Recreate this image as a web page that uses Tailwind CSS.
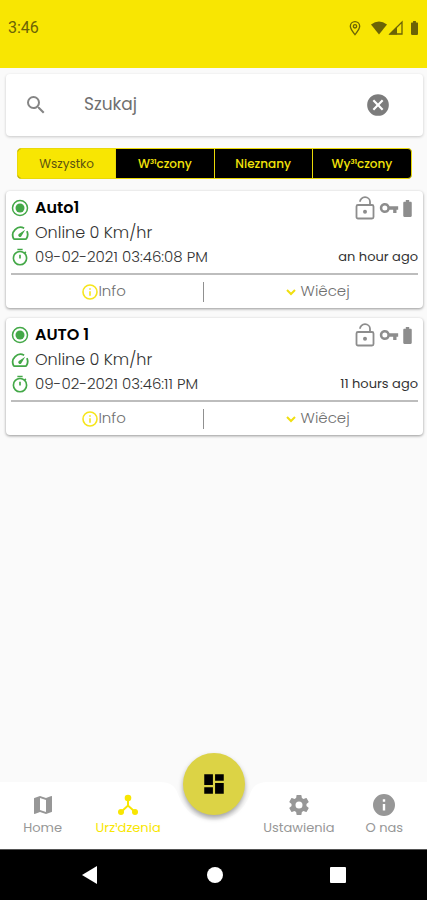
<!DOCTYPE html>
<html lang="pl">
<head>
<meta charset="utf-8">
<meta name="viewport" content="width=device-width, initial-scale=1">
<title>Urządzenia</title>
<script src="https://cdn.jsdelivr.net/npm/@tailwindcss/browser@4"></script>
</head>
<body class="bg-[#fafafa] font-[Poppins,Inter,sans-serif] text-[#333]">
<svg class="hidden">
  <symbol id="target" viewBox="0 0 24 24"><circle cx="12" cy="12" r="10" fill="none" stroke="currentColor" stroke-width="2"/><circle cx="12" cy="12" r="6" fill="currentColor"/></symbol>
  <symbol id="speed" viewBox="0 0 24 24"><path d="M17.500 5.600A10.400 10.400 0 0 0 3.400 19.400q.4.800 1.400.8h14.400q1 0 1.400-.8a10.400 10.400 0 0 0 .6-10" fill="none" stroke="currentColor" stroke-width="2.400"/><path d="M10.400 16.600a2.200 2.200 0 0 1 0-3.200L19 7.500l-5.400 9.100a2.200 2.200 0 0 1-3.200 0z" fill="currentColor"/></symbol>
  <symbol id="timer" viewBox="0 0 24 24"><circle cx="12" cy="13.500" r="8.800" fill="none" stroke="currentColor" stroke-width="2.200"/><path d="M8.500 2h7M12 9v5M18 7l1.800-1.800" fill="none" stroke="currentColor" stroke-width="2.200"/></symbol>
  <symbol id="lock" viewBox="0 0 20 24"><rect x="1.500" y="9" width="17" height="13.500" rx="1.500" fill="none" stroke="currentColor" stroke-width="1.800"/><path d="M5 5.800a5 4.600 0 0 1 10 0V9" fill="none" stroke="currentColor" stroke-width="1.800"/><circle cx="10" cy="15.800" r="2" fill="currentColor"/></symbol>
  <symbol id="key" viewBox="0 0 24 24"><path d="M12.650 10A6 6 0 0 0 7 6c-3.310 0-6 2.690-6 6s2.690 6 6 6a6 6 0 0 0 5.650-4H17v4h4v-4h2v-4H12.650zM7 15a3 3 0 1 1 0-6 3 3 0 0 1 0 6z" fill="currentColor"/></symbol>
  <symbol id="battery" viewBox="7 2 10 20"><path d="M15.670 4H14V2h-4v2H8.330C7.600 4 7 4.600 7 5.330v15.330C7 21.400 7.600 22 8.330 22h7.330c.74 0 1.340-.6 1.340-1.330V5.330C17 4.600 16.400 4 15.670 4z" fill="currentColor"/></symbol>
  <symbol id="info-line" viewBox="0 0 24 24"><circle cx="12" cy="12" r="10.500" fill="none" stroke="currentColor" stroke-width="2.400"/><path d="M12 11v6.500M12 6.500v2.200" stroke="currentColor" stroke-width="2.400"/></symbol>
  <symbol id="chevron" viewBox="0 0 12 12"><path d="M2 4l4 4 4-4" fill="none" stroke="currentColor" stroke-width="2"/></symbol>
</svg>
<div class="flex min-h-screen flex-col">
  <header class="flex h-[68px] items-start justify-between bg-[#f8e602] px-2 pt-[18px] text-[#6b6306]">
    <span class="font-[Roboto,sans-serif] text-base leading-5">3:46</span>
    <div class="flex h-5 items-center">
      <svg class="mr-2 h-4 w-4" viewBox="0 0 24 24" fill="none" stroke="currentColor" stroke-width="2"><path d="M12 22C8 17 5 13.500 5 9.500a7 7 0 0 1 14 0C19 13.500 16 17 12 22z"/><circle cx="12" cy="9.500" r="2.500"/></svg>
      <svg class="h-4 w-4" viewBox="0 0 16 16" fill="currentColor"><path d="M0 4.500Q8-1.500 16 4.500L8 14.500z"/></svg>
      <svg class="ml-px h-4 w-4" viewBox="0 0 16 16"><path d="M2 14L14 2v12z" fill="none" stroke="currentColor" stroke-width="1.300"/><path d="M1 14.500L9 6.500v8z" fill="currentColor"/></svg>
      <svg class="ml-1.5 h-[14px] w-[9px]"><use href="#battery"/></svg>
    </div>
  </header>

  <main class="flex-1 pt-1.5 pr-1 pl-1.5">
    <div class="flex h-[62px] items-center rounded-sm bg-white pr-8 pl-[18px] shadow-[0_1px_3px_rgba(0,0,0,0.2)]">
      <svg class="h-6 w-6 text-[#858585]" viewBox="0 0 24 24" fill="currentColor"><path d="M15.500 14h-.79l-.28-.27A6.470 6.470 0 0 0 16 9.500 6.500 6.500 0 1 0 9.500 16c1.610 0 3.090-.59 4.230-1.570l.27.28v.79l5 4.990L20.490 19l-4.990-5zm-6 0a4.500 4.500 0 1 1 0-9 4.500 4.500 0 0 1 0 9z"/></svg>
      <input type="text" aria-label="Szukaj" placeholder="Szukaj" class="ml-9 min-w-0 flex-1 bg-transparent text-[17px] outline-none placeholder:text-[#707070]">
      <button aria-label="Wyczyść" class="text-[#7c7c7c]"><svg class="h-[26px] w-[26px]" viewBox="0 0 24 24" fill="currentColor"><path d="M12 2a10 10 0 1 0 0 20 10 10 0 0 0 0-20zm5 13.590L15.590 17 12 13.410 8.410 17 7 15.590 10.590 12 7 8.410 8.410 7 12 10.590 15.590 7 17 8.410 13.410 12z"/></svg></button>
    </div>

    <div class="mx-[11px] mt-3 grid h-[31px] grid-cols-4 divide-x divide-[#e9d908] overflow-hidden rounded border border-[#e9d908] bg-black text-xs text-[#f3e30a]">
      <button class="bg-[#f8e602] text-[#5c5410]">Wszystko</button>
      <button class="font-medium">W³¹czony</button>
      <button class="font-medium">Nieznany</button>
      <button class="font-medium">Wy³¹czony</button>
    </div>

    <article class="mt-3 rounded bg-white px-[5px] pt-1 shadow-[0_1px_3px_rgba(0,0,0,0.4)]">
      <div class="flex h-[26px] items-center">
        <svg class="h-[18px] w-[18px] text-[#43a847]"><use href="#target"/></svg>
        <h2 class="ml-1.5 flex-1 text-base font-semibold text-black">Auto1</h2>
        <div class="flex items-center pr-1.5 text-[#8d8d8d]">
          <svg class="h-6 w-5"><use href="#lock"/></svg>
          <svg class="ml-1 h-5 w-5"><use href="#key"/></svg>
          <svg class="ml-1 h-[17px] w-[9px]"><use href="#battery"/></svg>
        </div>
      </div>
      <div class="flex h-6 items-center"><svg class="h-[18px] w-[18px] text-[#43a847]"><use href="#speed"/></svg><span class="ml-1.5 text-base font-light">Online 0 Km/hr</span></div>
      <div class="flex h-6 items-center"><svg class="h-[18px] w-[18px] text-[#43a847]"><use href="#timer"/></svg><span class="ml-1.5 flex-1 text-[15px] font-light">09-02-2021 03:46:08 PM</span><span class="text-[13px]">an hour ago</span></div>
      <div class="mt-1 grid h-[35px] grid-cols-[9fr_1px_10fr] items-center border-t-2 border-[#bdbdbd] text-[15px] font-light text-[#707070]">
        <button class="flex items-center justify-center pr-1.5"><svg class="h-4 w-4 text-[#f6e51b]"><use href="#info-line"/></svg>Info</button>
        <span class="h-5 w-px bg-[#909090]"></span>
        <button class="flex items-center justify-center gap-1 pl-3"><svg class="h-3 w-3 text-[#f0df10]"><use href="#chevron"/></svg>Wiêcej</button>
      </div>
    </article>

    <article class="mt-2.5 rounded bg-white px-[5px] pt-1 shadow-[0_1px_3px_rgba(0,0,0,0.4)]">
      <div class="flex h-[26px] items-center">
        <svg class="h-[18px] w-[18px] text-[#43a847]"><use href="#target"/></svg>
        <h2 class="ml-1.5 flex-1 text-base font-semibold text-black">AUTO 1</h2>
        <div class="flex items-center pr-1.5 text-[#8d8d8d]">
          <svg class="h-6 w-5"><use href="#lock"/></svg>
          <svg class="ml-1 h-5 w-5"><use href="#key"/></svg>
          <svg class="ml-1 h-[17px] w-[9px]"><use href="#battery"/></svg>
        </div>
      </div>
      <div class="flex h-6 items-center"><svg class="h-[18px] w-[18px] text-[#43a847]"><use href="#speed"/></svg><span class="ml-1.5 text-base font-light">Online 0 Km/hr</span></div>
      <div class="flex h-6 items-center"><svg class="h-[18px] w-[18px] text-[#43a847]"><use href="#timer"/></svg><span class="ml-1.5 flex-1 text-[15px] font-light">09-02-2021 03:46:11 PM</span><span class="text-[13px]">11 hours ago</span></div>
      <div class="mt-1 grid h-[35px] grid-cols-[9fr_1px_10fr] items-center border-t-2 border-[#bdbdbd] text-[15px] font-light text-[#707070]">
        <button class="flex items-center justify-center pr-1.5"><svg class="h-4 w-4 text-[#f6e51b]"><use href="#info-line"/></svg>Info</button>
        <span class="h-5 w-px bg-[#909090]"></span>
        <button class="flex items-center justify-center gap-1 pl-3"><svg class="h-3 w-3 text-[#f0df10]"><use href="#chevron"/></svg>Wiêcej</button>
      </div>
    </article>
  </main>

  <nav class="relative h-[67px] text-[13px] leading-5 text-[#979797]">
    <div class="absolute inset-0 flex">
      <div class="flex-1 bg-white"></div>
      <svg class="h-full w-[110px]" viewBox="0 0 110 67"><path d="M0 0C12 0 16 4 19 12C25 29 37 38 55 38S85 29 91 12C94 4 98 0 110 0V67H0z" fill="#fff"/></svg>
      <div class="flex-1 bg-white"></div>
    </div>
    <div class="relative grid h-full grid-cols-5 pt-[11px]">
      <a href="#" class="flex flex-col items-center gap-px"><svg class="h-6 w-6" viewBox="0 0 24 24" fill="currentColor"><path d="M20.500 3l-.16.03L15 5.100 9 3 3.360 4.900A.5.5 0 0 0 3 5.380V20.500c0 .28.220.5.5.5l.16-.03L9 18.900l6 2.100 5.640-1.900a.5.5 0 0 0 .36-.48V3.500a.5.5 0 0 0-.5-.5zM15 19l-6-2.110V5l6 2.110V19z"/></svg>Home</a>
      <a href="#" class="flex flex-col items-center gap-px text-[#f8e602]"><svg class="h-6 w-6" viewBox="0 0 24 24" fill="currentColor"><circle cx="12" cy="5" r="3.300"/><circle cx="5" cy="19" r="3"/><circle cx="19" cy="19" r="3"/><path d="M12 5v8M5 19l7-6.500 7 6.500" fill="none" stroke="currentColor" stroke-width="2"/></svg>Urz¹dzenia</a>
      <span></span>
      <a href="#" class="flex flex-col items-center gap-px"><svg class="h-6 w-6" viewBox="0 0 24 24" fill="currentColor"><path d="M19.430 12.980c.04-.32.07-.64.07-.98s-.03-.66-.07-.98l2.110-1.650c.19-.15.24-.42.12-.64l-2-3.460c-.12-.22-.39-.3-.61-.22l-2.490 1c-.52-.4-1.080-.73-1.690-.98l-.38-2.650A.49.49 0 0 0 14 2h-4c-.25 0-.46.18-.49.42l-.38 2.650c-.61.25-1.170.59-1.690.98l-2.490-1c-.23-.09-.49 0-.61.22l-2 3.460c-.13.22-.07.49.12.64l2.110 1.650c-.04.32-.07.65-.07.98s.03.66.07.98l-2.110 1.650c-.19.15-.24.42-.12.64l2 3.460c.12.22.39.3.61.22l2.490-1c.52.4 1.080.73 1.690.98l.38 2.650c.03.24.24.42.49.42h4c.25 0 .46-.18.49-.42l.38-2.650c.61-.25 1.170-.59 1.690-.98l2.490 1c.23.09.49 0 .61-.22l2-3.460c.12-.22.07-.49-.12-.64l-2.110-1.650zM12 15.500a3.500 3.500 0 1 1 0-7 3.500 3.500 0 0 1 0 7z"/></svg>Ustawienia</a>
      <a href="#" class="flex flex-col items-center gap-px"><svg class="h-6 w-6" viewBox="0 0 24 24" fill="currentColor"><path d="M12 1a11 11 0 1 0 0 22 11 11 0 0 0 0-22zm1.200 16.500h-2.400v-6.500h2.400zm0-8.800h-2.400V6.300h2.400z"/></svg>O nas</a>
    </div>
    <button aria-label="Panel" class="absolute -top-[29px] left-1/2 flex h-[62px] w-[62px] -translate-x-1/2 items-center justify-center rounded-full bg-[#dcd345] text-black shadow-[0_3px_5px_rgba(0,0,0,0.35)]"><svg class="h-[26px] w-[26px]" viewBox="0 0 24 24" fill="currentColor"><path d="M3 13h8V3H3v10zm0 8h8v-6H3v6zm10 0h8V11h-8v10zm0-18v6h8V3h-8z"/></svg></button>
  </nav>

  <footer class="flex h-[51px] items-center justify-around border-t border-[#555] bg-black pr-7 pl-[26px] text-white">
    <button aria-label="Wstecz"><svg class="h-5 w-5" viewBox="0 0 20 20" fill="currentColor"><path d="M2 10L17 1v18z"/></svg></button>
    <button aria-label="Ekran główny" class="h-4 w-4 rounded-full bg-white"></button>
    <button aria-label="Ostatnie" class="h-4 w-4 rounded-[1px] bg-white"></button>
  </footer>
</div>
</body>
</html>
